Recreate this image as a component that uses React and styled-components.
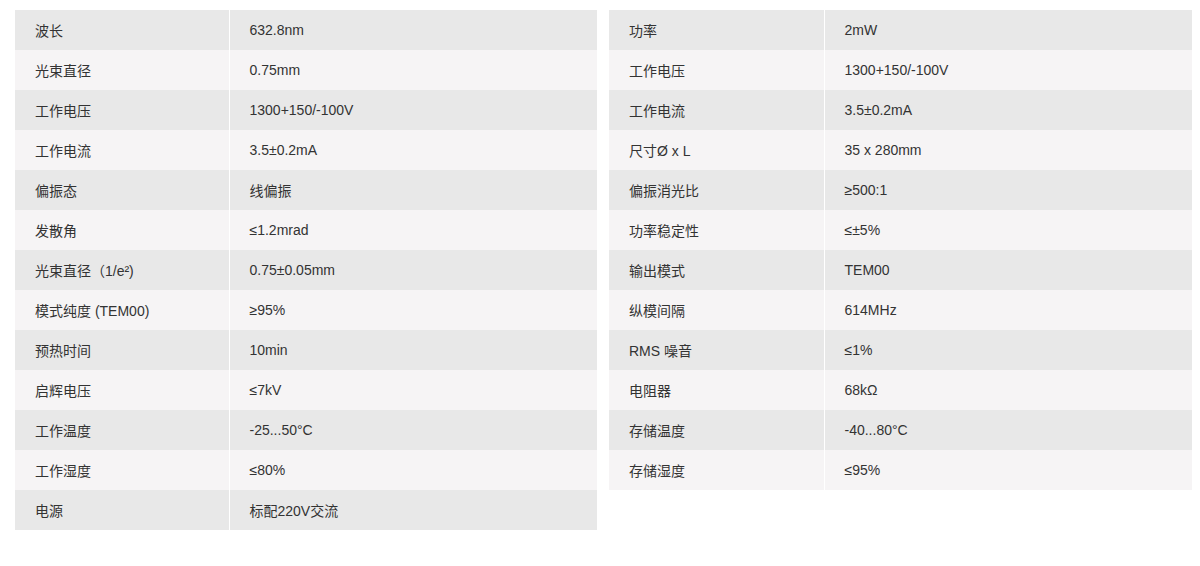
import React from "react";
import styled, { createGlobalStyle } from "styled-components";

const left = [
  ["波长", "632.8nm"],
  ["光束直径", "0.75mm"],
  ["工作电压", "1300+150/-100V"],
  ["工作电流", "3.5±0.2mA"],
  ["偏振态", "线偏振"],
  ["发散角", "≤1.2mrad"],
  ["光束直径（1/e²)", "0.75±0.05mm"],
  ["模式纯度 (TEM00)", "≥95%"],
  ["预热时间", "10min"],
  ["启辉电压", "≤7kV"],
  ["工作温度", "-25...50°C"],
  ["工作湿度", "≤80%"],
  ["电源", "标配220V交流"],
];

const right = [
  ["功率", "2mW"],
  ["工作电压", "1300+150/-100V"],
  ["工作电流", "3.5±0.2mA"],
  ["尺寸Ø x L", "35 x 280mm"],
  ["偏振消光比", "≥500:1"],
  ["功率稳定性", "≤±5%"],
  ["输出模式", "TEM00"],
  ["纵模间隔", "614MHz"],
  ["RMS 噪音", "≤1%"],
  ["电阻器", "68kΩ"],
  ["存储温度", "-40...80°C"],
  ["存储湿度", "≤95%"],
];

function SpecTable({ rows, width, labelWidth }) {
  return (
    <Table $width={width}>
      <tbody>
        {rows.map(([name, value], i) => (
          <Row key={name} $odd={i % 2 === 1}>
            <Label $width={labelWidth}>{name}</Label>
            <Value>{value}</Value>
          </Row>
        ))}
      </tbody>
    </Table>
  );
}

function App() {
  return (
    <>
      <GlobalStyle />
      <Page>
        <SpecTable rows={left} width={582} labelWidth={214} />
        <SpecTable rows={right} width={583} labelWidth={215} />
      </Page>
    </>
  );
}

const GlobalStyle = createGlobalStyle`
  body {
    margin: 0;
    background: #fff;
    font-family: "Liberation Sans", Arial, "Noto Sans CJK SC", sans-serif;
  }
`;

const Page = styled.div`
  display: flex;
  align-items: flex-start;
  gap: 12px;
  padding: 10px 0 0 15px;
`;

const Table = styled.table`
  width: ${(p) => p.$width}px;
  border-collapse: collapse;
  table-layout: fixed;
  font-size: 14px;
  color: #333;
`;

const Row = styled.tr`
  height: 40px;
  background: ${(p) => (p.$odd ? "#f6f4f5" : "#e8e8e8")};
`;

const Label = styled.td`
  width: ${(p) => p.$width}px;
  padding: 0 20px;
  box-sizing: border-box;
  border-right: 1px solid #fff;
  vertical-align: middle;
`;

const Value = styled.td`
  padding: 0 20px;
  vertical-align: middle;
`;

export default App;
